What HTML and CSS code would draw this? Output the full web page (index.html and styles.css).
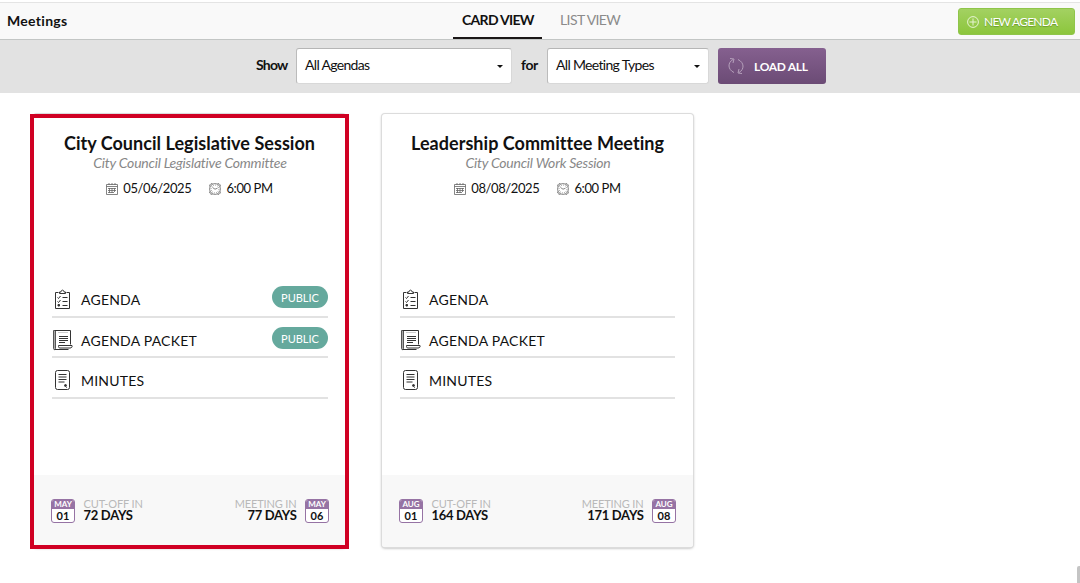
FILE: index.html
```html
<!DOCTYPE html>
<html lang="en">
<head>
<meta charset="utf-8">
<title>Meetings</title>
<link rel="stylesheet" href="styles.css">
</head>
<body>
<svg class="sprite" aria-hidden="true">
  <symbol id="agenda" viewBox="0 0 20 21">
    <path d="M5.500 3.500h-3v16h14v-16h-3M6.500 4.500V3h1.500C8 .5 11 .5 11 3h1.500v1.500zM9.500 8.500h5M9.500 12.500h5M9.500 16.500h5M4.500 8.500l1 1 2-2.500M4.500 12.500l1 1 2-2.500"/>
    <path d="M5 15.500h1.500v1.500H5z" fill="#333"/>
  </symbol>
  <symbol id="packet" viewBox="0 0 20 21">
    <path d="M.5.5h2v18c0 1.500-2 1.500-2 0z" fill="#aaa" stroke="#555"/>
    <path d="M2 .5h15.500v14M1.500 19.500h14M5.500 15.500h13.500c.5 1.500-.5 2.500-2 2.500H7c-1.500 0-1.500-1-1.500-2.500z"/>
    <path d="M5.500 2.500h10" stroke-dasharray="1 1" stroke="#999"/>
    <path d="M6 6.500h9M6 8.500h9M6 10.500h9M6 12.500h6"/>
  </symbol>
  <symbol id="minutes" viewBox="0 0 20 21">
    <rect x="2.500" y=".5" width="14" height="19" rx="2"/>
    <path d="M5.500 4.500h8M5.500 7h8M5.500 9.500h8M5.500 12h6"/>
    <circle cx="12.500" cy="15.500" r="1" fill="#333"/><path d="M13 17.500h1" stroke="#777"/>
  </symbol>
  <symbol id="calendar" viewBox="0 0 12 12">
    <path d="M.5 1.500h11v10H.5zM.5 3.500h11M3 0v2M6 0v2M9 0v2M2 5.500h8M2 7.500h8M2 9.500h6M3.500 5v5M6 5v5M8.500 5v4"/>
  </symbol>
  <symbol id="clock" viewBox="0 0 12 12">
    <circle cx="6" cy="6" r="5.400"/>
    <circle cx="6" cy="6" r="3.900" stroke-dasharray=".8 1.200"/>
    <path d="M3.500 4.500L6 6.200l2.500-1M.7 3.500V2L2 .7h1.500M11.300 3.500V2L10 .7H8.500M.7 8.500V10L2 11.300h1.500M11.300 8.500V10L10 11.300H8.500" />
  </symbol>
</svg>

<header class="header">
  <h1 class="title">Meetings</h1>
  <nav class="tabs">
    <a class="tab active">CARD VIEW</a>
    <a class="tab list">LIST VIEW</a>
  </nav>
  <button class="new-agenda">
    <svg viewBox="0 0 12 12"><circle cx="6" cy="6" r="5.400"/><path d="M6 2.500v7M2.500 6h7"/></svg>
    <span>NEW AGENDA</span>
  </button>
</header>

<div class="filters">
  <span class="label show">Show</span>
  <div class="select agendas"><span>All Agendas</span><i class="caret"></i></div>
  <span class="label for">for</span>
  <div class="select types"><span>All Meeting Types</span><i class="caret"></i></div>
  <button class="load-all">
    <svg viewBox="0 0 16 18"><path d="M6 15.500C-.5 12.500-.5 5.500 5 2.500M2 1.500l4 .5-1 4M10 2.500c6.500 3 6.500 10 1 13M14 16.500l-4-.5 1-4"/></svg>
    <span>LOAD ALL</span>
  </button>
</div>

<main class="cards">
  <article class="card selected">
    <h2 class="name">City Council Legislative Session</h2>
    <p class="group">City Council Legislative Committee</p>
    <div class="when">
      <svg><use href="#calendar"/></svg><span class="date">05/06/2025</span>
      <svg><use href="#clock"/></svg><span class="time">6:00 PM</span>
    </div>
    <ul class="docs">
      <li><svg><use href="#agenda"/></svg><span class="doc">AGENDA</span><span class="pill">PUBLIC</span></li>
      <li><svg><use href="#packet"/></svg><span class="doc">AGENDA PACKET</span><span class="pill">PUBLIC</span></li>
      <li><svg><use href="#minutes"/></svg><span class="doc">MINUTES</span></li>
    </ul>
    <footer class="foot">
      <div class="day"><b>MAY</b><span>01</span></div>
      <div class="count"><span>CUT-OFF IN</span><b>72 DAYS</b></div>
      <div class="count right"><span>MEETING IN</span><b>77 DAYS</b></div>
      <div class="day"><b>MAY</b><span>06</span></div>
    </footer>
  </article>

  <article class="card">
    <h2 class="name">Leadership Committee Meeting</h2>
    <p class="group">City Council Work Session</p>
    <div class="when">
      <svg><use href="#calendar"/></svg><span class="date">08/08/2025</span>
      <svg><use href="#clock"/></svg><span class="time">6:00 PM</span>
    </div>
    <ul class="docs">
      <li><svg><use href="#agenda"/></svg><span class="doc">AGENDA</span></li>
      <li><svg><use href="#packet"/></svg><span class="doc">AGENDA PACKET</span></li>
      <li><svg><use href="#minutes"/></svg><span class="doc">MINUTES</span></li>
    </ul>
    <footer class="foot">
      <div class="day"><b>AUG</b><span>01</span></div>
      <div class="count"><span>CUT-OFF IN</span><b>164 DAYS</b></div>
      <div class="count right"><span>MEETING IN</span><b>171 DAYS</b></div>
      <div class="day"><b>AUG</b><span>08</span></div>
    </footer>
  </article>
</main>
<div class="thumb"></div>
</body>
</html>
```
FILE: styles.css
```css
* { box-sizing: border-box; }
body {
  margin: 0;
  height: 583px;
  overflow: hidden;
  background: #fff;
  color: #111;
  font: 13px/16px Lato, "Liberation Sans", sans-serif;
  white-space: nowrap;
}
h1, h2, p, ul { margin: 0; padding: 0; }
button { border: 0; padding: 0; font: inherit; color: #fff; }
svg { fill: none; stroke: #333; flex: none; }
.sprite { position: absolute; width: 0; height: 0; }

.header {
  display: grid;
  grid-template-columns: 453px 1fr 117px;
  height: 40px;
  padding-right: 5px;
  background: linear-gradient(#fff 2px, #e4e4e4 2px, #e4e4e4 3px, #f9f9f9 3px);
  border-bottom: 1px solid #c3c6c5;
}
.title { padding: 12px 0 0 7px; font-size: 14px; line-height: 17px; font-weight: 700; letter-spacing: .3px; }
.tabs { display: flex; height: 39px; }
.tab { height: 39px; padding-top: 11px; font-size: 14px; line-height: 17px; letter-spacing: -.6px; color: #8b8b8b; }
.tab.active { width: 89px; padding-left: 9px; color: #111; font-weight: 700; letter-spacing: -.7px; border-bottom: 2px solid #1b1717; }
.tab.list { padding-left: 18px; }
.new-agenda {
  display: flex;
  align-items: center;
  gap: 5px;
  height: 27px;
  margin-top: 8px;
  padding-left: 8px;
  border-radius: 3px;
  background: linear-gradient(#a3d162, #8cc63c);
  border: 1px solid #8fc54a;
  font-size: 12px;
  letter-spacing: -.75px;
  text-shadow: 0 1px 1px #6c9b2c;
}
.new-agenda svg { width: 12px; height: 12px; stroke: #e7f4d3; }

.filters { display: flex; height: 53px; padding: 8px 0 0 256px; background: #e2e2e2; }
.label { padding-top: 8px; font-size: 14px; line-height: 17px; font-weight: 700; letter-spacing: -.8px; }
.show { width: 40px; }
.for { width: 26px; letter-spacing: -.4px; }
.select {
  display: flex;
  justify-content: space-between;
  align-items: center;
  height: 36px;
  padding: 0 8px 2px;
  background: #fff;
  border: 1px solid #d8d8d8;
  border-top-color: #b5b5b5;
  border-left-color: #bbb;
  border-radius: 3px;
  font-size: 14px;
  letter-spacing: -.68px;
}
.agendas { width: 216px; margin-right: 9px; }
.types { width: 162px; margin-right: 9px; }
.caret { border: 3px solid transparent; border-top-color: #111; border-bottom: 0; margin-top: 3px; }
.load-all {
  display: flex;
  align-items: center;
  width: 108px;
  height: 36px;
  padding-left: 10px;
  border-radius: 3px;
  background: linear-gradient(#85608f, #6b4b75);
  font-size: 12px;
  font-weight: 700;
  letter-spacing: -.3px;
}
.load-all svg { width: 16px; height: 18px; margin-right: 10px; stroke: #b5a0bb; }
.load-all span { padding-top: 2px; }

.cards { display: flex; gap: 36px; padding: 21px 0 0 34px; }
.card {
  position: relative;
  display: flex;
  flex-direction: column;
  width: 311px;
  height: 433px;
  border-radius: 3px;
  background: #fff;
  box-shadow: 0 0 0 1px #dcdcdc, 0 1px 3px rgba(0, 0, 0, .4);
}
.card + .card { margin-left: 1px; }
.card + .card .docs { padding-right: 18px; }
.card + .card .foot { padding-right: 17px; }
.selected::after {
  content: "";
  position: absolute;
  inset: 0 -4px -2px -4px;
  border: 4px solid #d00023;
}
.name { padding-top: 18px; text-align: center; font-size: 18px; line-height: 22px; font-weight: 700; letter-spacing: .04px; }
.group { padding-left: 1px; text-align: center; font-size: 14px; line-height: 18px; font-style: italic; letter-spacing: -.22px; color: #888; }
.when { display: flex; justify-content: center; align-items: center; height: 16px; margin-top: 8px; font-size: 13px; letter-spacing: -.4px; }
.when svg { width: 12px; height: 12px; margin: 1px 5px 0 0; stroke: #666; stroke-width: .8; }
.date { margin-right: 18px; }
.docs { list-style: none; margin-top: 81px; padding: 0 17px 0 18px; }
.docs li { display: flex; align-items: center; height: 40.500px; border-bottom: 2px solid #e2e2e2; }
.docs svg { width: 20px; height: 21px; margin: 7px 8px 0 1px; }
.doc { flex: 1; padding-top: 8px; font-size: 14px; letter-spacing: .22px; }
.pill {
  width: 56px;
  height: 22px;
  margin-top: 2px;
  border-radius: 11px;
  background: #65a99d;
  color: #fff;
  font-size: 11px;
  line-height: 23px;
  text-align: center;
}
.foot {
  display: flex;
  height: 72px;
  margin-top: auto;
  padding: 24px 16px 0 17px;
  background: #f8f8f8;
  border-radius: 0 0 3px 3px;
}
.day { width: 24px; height: 24px; border: 1px solid #9673a4; border-radius: 3px; background: #fff; text-align: center; overflow: hidden; }
.day b { display: block; height: 9px; background: #9673a4; color: #fff; font-size: 8px; line-height: 9px; }
.day span { display: block; font-size: 11px; line-height: 14px; font-weight: 700; }
.count { flex: 1; margin-top: -1px; padding: 0 8.500px; }
.count span { display: block; font-size: 11px; line-height: 11px; letter-spacing: -.15px; color: #b9b9b9; }
.count b { display: block; font-size: 13px; line-height: 12px; letter-spacing: -.3px; }
.right { text-align: right; }
.thumb { position: absolute; right: 0; bottom: 0; width: 3px; height: 17px; background: #c4c4c4; border-radius: 2px 0 0 0; }
```
